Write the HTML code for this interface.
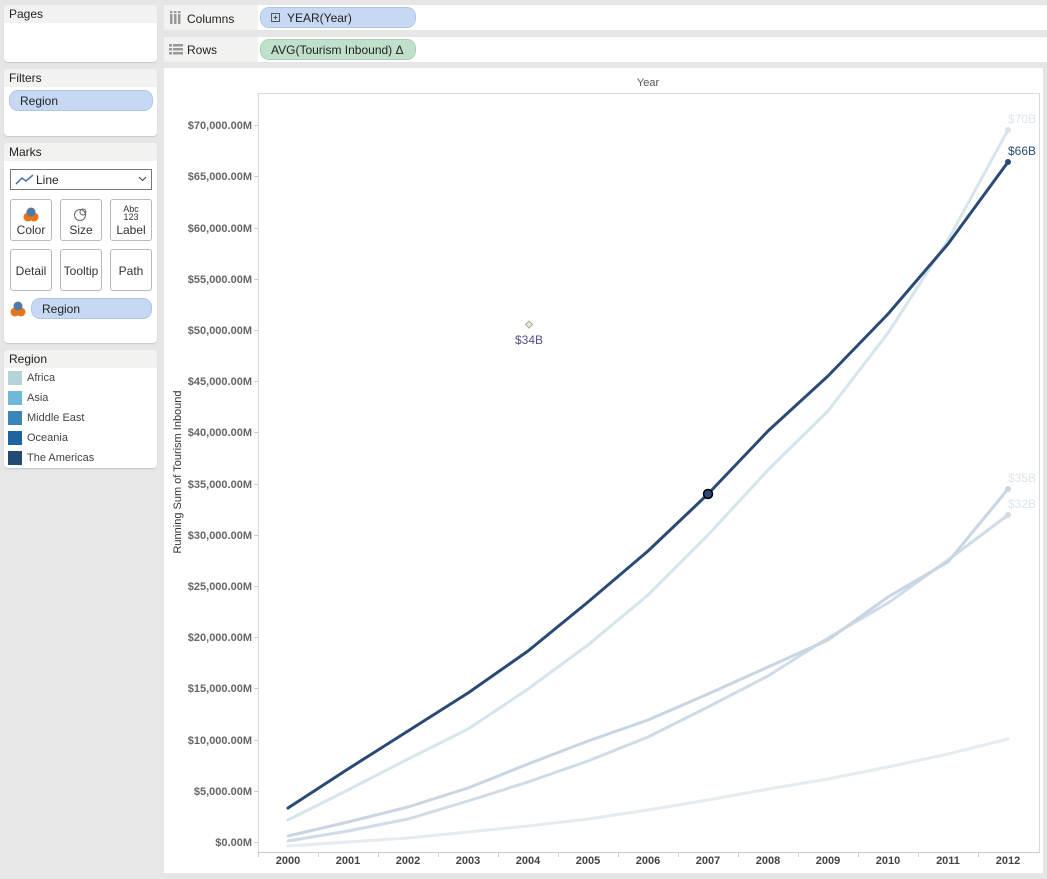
<!DOCTYPE html>
<html><head><meta charset="utf-8"><style>
*{margin:0;padding:0;box-sizing:border-box}
body{width:1047px;height:879px;background:#e6e6e6;font-family:"Liberation Sans",Arial,sans-serif;position:relative;overflow:hidden;color:#222}
.card{position:absolute;background:#fff;border-radius:4px;box-shadow:0 1px 1px #c8c8c8}
.hdr{background:#f2f2f0;height:18px;font-size:12px;padding:2px 5px;border-radius:4px 4px 0 0}
.pill{position:absolute;background:#c7d9f2;border:1px solid #b0c6e6;border-radius:9px;font-size:12px;padding:3px 10px;height:21px}
.btn{position:absolute;width:42px;height:42px;border:1px solid #b8b8b8;border-radius:3px;background:#fff;font-size:12px;text-align:center;color:#333}
.sw{position:absolute;left:4px;width:14px;height:14px}
.lg{position:absolute;left:23px;font-size:11px;color:#444}
</style></head><body>
<div class="card" style="left:4px;top:5px;width:153px;height:57px"><div class="hdr">Pages</div></div>
<div class="card" style="left:4px;top:69px;width:153px;height:67px"><div class="hdr">Filters</div></div>
<div class="pill" style="left:9px;top:90px;width:144px">Region</div>
<div class="card" style="left:4px;top:143px;width:153px;height:200px"><div class="hdr">Marks</div></div>
<div style="position:absolute;left:10px;top:169px;width:142px;height:21px;border:1px solid #777;background:#fff;font-size:12px;padding:3px 0 0 25px">Line
<svg style="position:absolute;left:4px;top:4px" width="20" height="12"><polyline points="1,10 7,4 11,7 18,1" fill="none" stroke="#4f7aa6" stroke-width="1.6"/></svg>
<svg style="position:absolute;right:4px;top:6px" width="9" height="6"><polyline points="1,1 4.5,4.5 8,1" fill="none" stroke="#444"/></svg></div>
<div class="btn" style="left:10px;top:199px"><svg width="20" height="18" style="margin-top:5px"><circle cx="7" cy="12" r="4.5" fill="#e3751d"/><circle cx="13" cy="12" r="4.5" fill="#e3751d"/><circle cx="10" cy="7" r="4.5" fill="#4f7aa6"/></svg><div style="margin-top:-3px">Color</div></div>
<div class="btn" style="left:60px;top:199px"><svg width="20" height="18" style="margin-top:5px"><circle cx="9" cy="10" r="5.5" fill="none" stroke="#666"/><circle cx="12" cy="7" r="3" fill="none" stroke="#666"/></svg><div style="margin-top:-3px">Size</div></div>
<div class="btn" style="left:110px;top:199px"><div style="font-size:9px;line-height:8px;margin-top:5px">Abc<br>123</div><div style="margin-top:2px">Label</div></div>
<div class="btn" style="left:10px;top:249px;padding-top:14px">Detail</div>
<div class="btn" style="left:60px;top:249px;padding-top:14px">Tooltip</div>
<div class="btn" style="left:110px;top:249px;padding-top:14px">Path</div>
<svg style="position:absolute;left:10px;top:300px" width="18" height="18"><circle cx="5" cy="12" r="4.5" fill="#e3751d"/><circle cx="11" cy="12" r="4.5" fill="#e3751d"/><circle cx="8" cy="6" r="4.5" fill="#4f7aa6"/></svg>
<div class="pill" style="left:31px;top:298px;width:121px">Region</div>
<div class="card" style="left:4px;top:350px;width:153px;height:118px"><div class="hdr">Region</div>
<div class="sw" style="top:21px;background:#b4d4da"></div><div class="lg" style="top:22px">Africa</div>
<div class="sw" style="top:41px;background:#6fb8dc"></div><div class="lg" style="top:42px">Asia</div>
<div class="sw" style="top:61px;background:#3a86b8"></div><div class="lg" style="top:62px">Middle East</div>
<div class="sw" style="top:81px;background:#1d64a0"></div><div class="lg" style="top:82px">Oceania</div>
<div class="sw" style="top:101px;background:#234a75"></div><div class="lg" style="top:102px">The Americas</div>
</div>
<div style="position:absolute;left:164px;top:5px;width:883px;height:25px;background:#fff"><div style="position:absolute;left:0;top:0;width:94px;height:25px;background:#f2f2f0"></div></div>
<div style="position:absolute;left:164px;top:37px;width:883px;height:25px;background:#fff"><div style="position:absolute;left:0;top:0;width:94px;height:25px;background:#f2f2f0"></div></div>
<svg style="position:absolute;left:170px;top:11px" width="12" height="13"><g fill="#999"><rect x="0" y="3" width="2.5" height="10"/><rect x="4" y="3" width="2.5" height="10"/><rect x="8" y="3" width="2.5" height="10"/><rect x="0" y="0" width="2.5" height="2"/><rect x="4" y="0" width="2.5" height="2"/><rect x="8" y="0" width="2.5" height="2"/></g></svg>
<div style="position:absolute;left:187px;top:12px;font-size:12px">Columns</div>
<svg style="position:absolute;left:169px;top:44px" width="14" height="12"><g fill="#999"><rect x="0" y="0" width="3" height="2.5"/><rect x="4" y="0" width="10" height="2.5"/><rect x="0" y="4" width="3" height="2.5"/><rect x="4" y="4" width="10" height="2.5"/><rect x="0" y="8" width="3" height="2.5"/><rect x="4" y="8" width="10" height="2.5"/></g></svg>
<div style="position:absolute;left:187px;top:43px;font-size:12px">Rows</div>
<div class="pill" style="left:260px;top:7px;width:156px;padding-left:26px">YEAR(Year)<svg style="position:absolute;left:10px;top:5px" width="10" height="10"><rect x="0.5" y="0.5" width="8" height="8" fill="none" stroke="#555"/><path d="M2.5 4.5h4M4.5 2.5v4" stroke="#555"/></svg></div>
<div class="pill" style="left:260px;top:39px;width:156px;background:#c1e0cc;border-color:#a8d0b5;padding-left:10px">AVG(Tourism Inbound) Δ</div>
<div style="position:absolute;left:164px;top:68px;width:879px;height:805px;background:#fff"></div>
<svg style="position:absolute;left:0;top:0" width="1047" height="879" font-family="Liberation Sans, Arial, sans-serif">
<text x="648" y="86" font-size="11" fill="#555" text-anchor="middle">Year</text>
<rect x="258.5" y="93.5" width="781" height="759" fill="none" stroke="#d9d9d9"/>
<g font-size="11" font-weight="bold" fill="#666" text-anchor="end">
<text x="252" y="129">$70,000.00M</text><text x="252" y="180">$65,000.00M</text><text x="252" y="232">$60,000.00M</text><text x="252" y="283">$55,000.00M</text><text x="252" y="334">$50,000.00M</text><text x="252" y="385">$45,000.00M</text><text x="252" y="436">$40,000.00M</text><text x="252" y="488">$35,000.00M</text><text x="252" y="539">$30,000.00M</text><text x="252" y="590">$25,000.00M</text><text x="252" y="641">$20,000.00M</text><text x="252" y="692">$15,000.00M</text><text x="252" y="744">$10,000.00M</text><text x="252" y="795">$5,000.00M</text><text x="252" y="846">$0.00M</text>
</g>
<g stroke="#ccc"><path d="M254 125.5h4M254 176.5h4M254 228.5h4M254 279.5h4M254 330.5h4M254 381.5h4M254 432.5h4M254 484.5h4M254 535.5h4M254 586.5h4M254 637.5h4M254 688.5h4M254 740.5h4M254 791.5h4M254 842.5h4"/>
<path d="M258 852.5h782M258.5 852v5M318.5 852v5M378.5 852v5M438.5 852v5M498.5 852v5M558.5 852v5M618.5 852v5M678.5 852v5M738.5 852v5M798.5 852v5M858.5 852v5M918.5 852v5M978.5 852v5"/></g>
<g font-size="11" font-weight="bold" fill="#444" text-anchor="middle">
<text x="288" y="864">2000</text><text x="348" y="864">2001</text><text x="408" y="864">2002</text><text x="468" y="864">2003</text><text x="528" y="864">2004</text><text x="588" y="864">2005</text><text x="648" y="864">2006</text><text x="708" y="864">2007</text><text x="768" y="864">2008</text><text x="828" y="864">2009</text><text x="888" y="864">2010</text><text x="948" y="864">2011</text><text x="1008" y="864">2012</text>
</g>
<text transform="translate(181,472) rotate(-90)" font-size="11" fill="#333" text-anchor="middle">Running Sum of Tourism Inbound</text>
<g fill="none" stroke-linejoin="round" stroke-linecap="round">
<polyline stroke="#e5ebef" stroke-width="3" points="288,846 348,842 408,838 468,832 528,826 588,819 648,810 708,800 768,789 828,779 888,767 948,754 1008,739"/>
<polyline stroke="#cfdce7" stroke-width="3" points="288,841 348,831 408,819 468,801 528,782 588,761 648,737 708,707 768,676 828,638 888,603 948,560 1008,515"/>
<polyline stroke="#c8d5e3" stroke-width="3" points="288,836 348,822 408,807 468,788 528,764 588,741 648,720 708,694 768,667 828,640 888,597 948,562 1008,489"/>
<polyline stroke="#d6e5ec" stroke-width="3" points="288,820 348,790 408,759 468,729 528,689 588,645 648,595 708,535 768,470 828,411 888,333 948,240 1008,130"/>
<polyline stroke="#2a4a75" stroke-width="3" points="288,808 348,769 408,731 468,693 528,651 588,602 648,551 708,494 768,431 828,376 888,314 948,244 1008,162"/>
</g>
<circle cx="1008" cy="130" r="3" fill="#d6e5ec"/><circle cx="1008" cy="489" r="3" fill="#c8d5e3"/><circle cx="1008" cy="515" r="3" fill="#cfdce7"/><circle cx="1008" cy="162" r="3" fill="#2a4a75"/>
<circle cx="708" cy="494" r="4.5" fill="#2a4a75" stroke="#000" stroke-width="1.5"/>
<g font-size="12" fill="#dbe5ee"><text x="1008" y="123">$70B</text><text x="1008" y="482">$35B</text><text x="1008" y="508">$32B</text></g>
<text x="1008" y="155" font-size="12" fill="#2a4a75">$66B</text>
<path d="M529 321l3.5 3.5-3.5 3.5-3.5-3.5z" fill="#eee9c8" stroke="#aaa"/>
<text x="529" y="344" font-size="12" fill="#5a4e8a" text-anchor="middle">$34B</text>
</svg>
</body></html>
